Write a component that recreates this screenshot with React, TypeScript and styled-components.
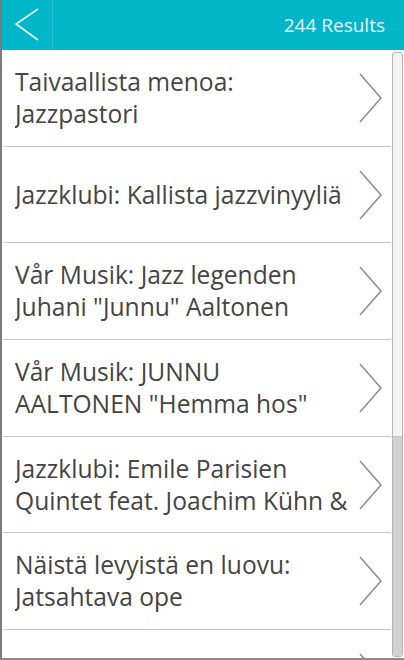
import React from 'react';
import styled, { createGlobalStyle } from 'styled-components';

const GlobalStyle = createGlobalStyle`
  html, body {
    margin: 0;
    padding: 0;
    background: #ffffff;
    overflow: hidden;
  }
  * {
    box-sizing: border-box;
  }
`;

const Frame = styled.div`
  width: 404px;
  height: 660px;
  display: flex;
  flex-direction: column;
  border-left: 2px solid #7c7c7c;
  border-bottom: 2px solid #8a8a8a;
  font-family: 'Open Sans', 'Noto Sans', sans-serif;
  overflow: hidden;
`;

const Header = styled.header`
  height: 50px;
  flex-shrink: 0;
  display: flex;
  align-items: center;
  background: #02b6c9;
`;

const BackButton = styled.button`
  width: 51px;
  height: 50px;
  padding: 0;
  border: none;
  border-right: 1px solid #22bfd0;
  background: transparent;
  display: flex;
  align-items: center;
  justify-content: center;
  cursor: pointer;
`;

const ResultCount = styled.span`
  margin-left: auto;
  padding-right: 19px;
  font-size: 19px;
  color: #e2f6f8;
`;

const Body = styled.div`
  flex: 1;
  display: flex;
  min-height: 0;
`;

const List = styled.ul`
  flex: 1;
  margin: 0;
  padding: 0 0 0 1px;
  list-style: none;
  overflow: hidden;
`;

const Row = styled.li`
  height: 96.7px;
  display: flex;
  align-items: center;
  padding: 0 8px 0 12px;
  border-bottom: 1px solid #c9c9c9;
`;

const Title = styled.span`
  flex: 1;
  margin-right: 8px;
  max-height: 64px;
  font-size: 24.6px;
  line-height: 32px;
  color: #454545;
  overflow: hidden;
`;

const Track = styled.div`
  width: 11px;
  margin: 2px 1px 1px 1px;
  border: 1px solid #b4b4b4;
  border-radius: 3px;
  background: #f3f3f3;
  display: flex;
  flex-direction: column;
  justify-content: flex-end;
  overflow: hidden;
`;

const Thumb = styled.div`
  height: 220px;
  background: #d2d2d2;
  border-top: 1px solid #c4c4c4;
`;

const items = [
  'Taivaallista menoa: Jazzpastori',
  'Jazzklubi: Kallista jazzvinyyliä',
  'Vår Musik: Jazz legenden Juhani "Junnu" Aaltonen',
  'Vår Musik: JUNNU AALTONEN "Hemma hos" Juhani Aaltonen',
  'Jazzklubi: Emile Parisien Quintet feat. Joachim Kühn & Michel Portal',
  'Näistä levyistä en luovu: Jatsahtava ope',
  'Jazzklubi: Klubiviisikkö: jatsia',
];

const BackIcon = () => (
  <svg width="26" height="34" viewBox="0 0 26 34">
    <polyline points="24,1 2,16 24,32" fill="none" stroke="#e6f8fa" strokeWidth="1.6" />
  </svg>
);

const Chevron = () => (
  <svg width="24" height="50" viewBox="0 0 24 50">
    <polyline points="1,1 22,25 1,49" fill="none" stroke="#8c8c8c" strokeWidth="1.5" />
  </svg>
);

const App: React.FC = () => (
  <>
    <GlobalStyle />
    <Frame>
      <Header>
        <BackButton aria-label="back">
          <BackIcon />
        </BackButton>
        <ResultCount>244 Results</ResultCount>
      </Header>
      <Body>
        <List>
          {items.map(item => (
            <Row key={item}>
              <Title>{item}</Title>
              <Chevron />
            </Row>
          ))}
        </List>
        <Track>
          <Thumb />
        </Track>
      </Body>
    </Frame>
  </>
);

export default App;
